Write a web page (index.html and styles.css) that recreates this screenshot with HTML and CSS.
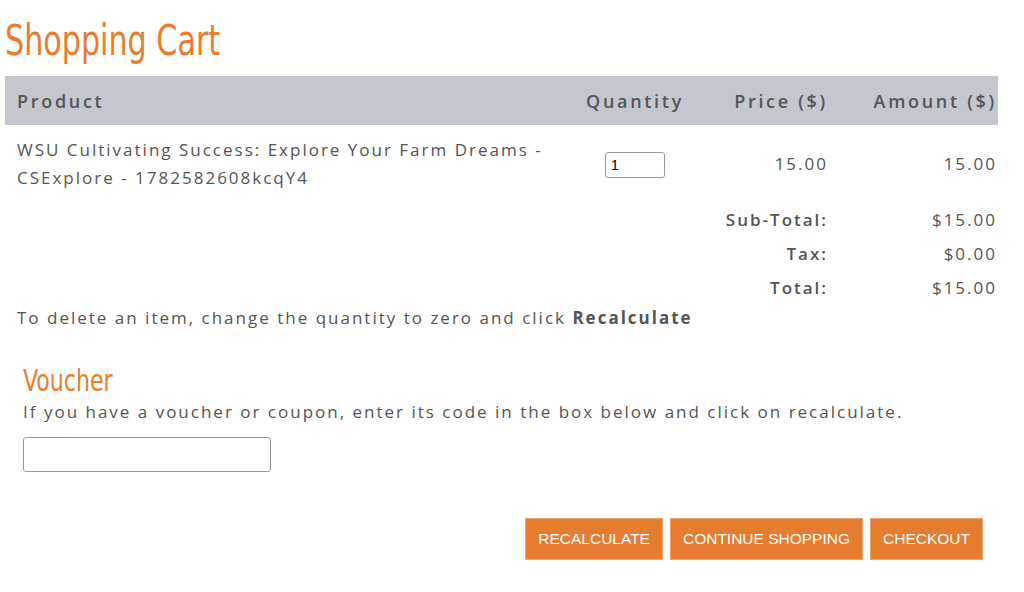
FILE: index.html
```html
<!DOCTYPE html>
<html>
<head>
    <title>Shopping Cart</title>
    <meta charset="utf-8">
    <meta name="viewport" content="width=device-width, initial-scale=1">
    <link rel="stylesheet" href="styles.css">
</head>
<body>
    <div class="page">
        <h1 class="title"><span>Shopping Cart</span></h1>
        <table class="cart">
            <thead>
                <tr>
                    <th class="col-product">Product</th>
                    <th class="col-qty">Quantity</th>
                    <th class="col-price">Price ($)</th>
                    <th class="col-amount">Amount ($)</th>
                </tr>
            </thead>
            <tbody>
                <tr class="item">
                    <td class="col-product">WSU Cultivating Success: Explore Your Farm Dreams - CSExplore - 1782582608kcqY4</td>
                    <td class="col-qty"><input class="qty" type="text" value="1"></td>
                    <td class="col-price">15.00</td>
                    <td class="col-amount">15.00</td>
                </tr>
                <tr class="sum">
                    <td colspan="3" class="sum-label">Sub-Total:</td>
                    <td class="col-amount">$15.00</td>
                </tr>
                <tr class="sum">
                    <td colspan="3" class="sum-label">Tax:</td>
                    <td class="col-amount">$0.00</td>
                </tr>
                <tr class="sum">
                    <td colspan="3" class="sum-label">Total:</td>
                    <td class="col-amount">$15.00</td>
                </tr>
            </tbody>
        </table>
        <p class="note">To delete an item, change the quantity to zero and click <b>Recalculate</b></p>

        <div class="voucher">
            <h2><span>Voucher</span></h2>
            <p>If you have a voucher or coupon, enter its code in the box below and click on recalculate.</p>
            <input class="code" type="text">
        </div>

        <div class="actions">
            <button class="btn">RECALCULATE</button>
            <button class="btn">CONTINUE SHOPPING</button>
            <button class="btn">CHECKOUT</button>
        </div>
    </div>
</body>
</html>
```

FILE: styles.css
```css
* { margin: 0; padding: 0; box-sizing: border-box; }
body { font-family: "Open Sans", sans-serif; font-size: 17px; color: #555; background: #fff; letter-spacing: 2px; }
.page { padding: 0 0 0 5px; }

.title { font-family: "DejaVu Sans Condensed", "DejaVu Sans", sans-serif; font-weight: normal; font-size: 43px; line-height: 52px; color: #e67e30; letter-spacing: 0; padding-top: 14px; height: 76px; }
.title span, .voucher h2 span { display: inline-block; transform-origin: left center; }
.title span { transform: scaleX(0.78); }

.cart { width: 993px; border-collapse: collapse; table-layout: fixed; }
.cart th { background: #c4c7ce; font-size: 18px; font-weight: 600; color: #555; height: 49px; padding: 0 12px; text-align: left; letter-spacing: 2.7px; }
.cart td { line-height: 28px; vertical-align: middle; }
.col-product { width: 570px; padding: 0 12px; text-align: left; }
.cart th.col-qty, .col-qty { width: 120px; text-align: center; padding: 0; }
.cart th.col-price, .col-price { width: 135px; text-align: right; padding: 0 2px 0 0; }
.cart th.col-amount, .col-amount { width: 168px; text-align: right; padding: 0 1px 0 0; }
.item td { padding-top: 11px; padding-bottom: 11px; }
.item td.col-product { padding-left: 12px; padding-right: 12px; }
.sum td { line-height: 26px; padding-top: 4px; padding-bottom: 4px; }
.sum-label { text-align: right; font-weight: 600; }
.sum td.sum-label { padding-right: 2px; }

.qty { width: 60px; height: 26px; border: 1px solid #999; border-radius: 3px; font-family: "Liberation Sans", Arial, sans-serif; font-size: 14px; color: #000; padding: 0 5px; letter-spacing: 0; }

.note { padding-left: 12px; line-height: 26px; }

.voucher { padding: 32px 0 0 18px; }
.voucher h2 { font-family: "DejaVu Sans Condensed", "DejaVu Sans", sans-serif; font-weight: normal; font-size: 30px; line-height: 36px; color: #e67e30; letter-spacing: 0; }
.voucher h2 span { transform: scaleX(0.82); }
.voucher p { line-height: 26px; }
.code { margin-top: 12px; width: 248px; height: 35px; border: 1px solid #999; border-radius: 3px; font-size: 14px; padding: 0 8px; }

.actions { display: flex; justify-content: flex-end; gap: 7px; padding: 46px 41px 0 0; }
.btn { height: 42px; padding: 0 12px; background: #e57c2f; color: #fff; border: 1px solid #f3a46b; font-family: "Liberation Sans", Arial, sans-serif; font-size: 15.5px; letter-spacing: 0; cursor: pointer; }
.btn:hover { background: #d86e22; }
```
